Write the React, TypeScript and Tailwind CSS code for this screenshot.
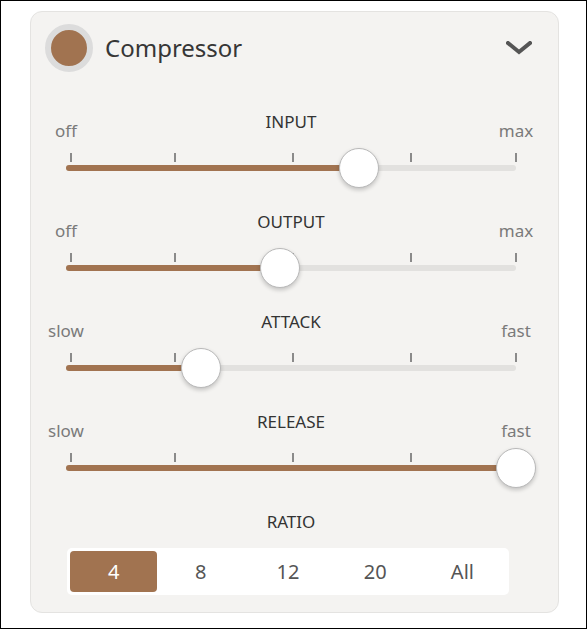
const BROWN = 'bg-[#a17350]';

type SliderDef = { name: string; left: string; right: string; value: number };

const sliders: SliderDef[] = [
  { name: 'INPUT', left: 'off', right: 'max', value: 0.651 },
  { name: 'OUTPUT', left: 'off', right: 'max', value: 0.476 },
  { name: 'ATTACK', left: 'slow', right: 'fast', value: 0.3 },
  { name: 'RELEASE', left: 'slow', right: 'fast', value: 1 },
];

// tick offsets in px from track start (track is 450px wide)
const ticks = [4, 108, 226, 344, 449];

function Slider({ s }: { s: SliderDef }) {
  return (
    <div className="h-[100px] px-5">
      <div className="flex h-[33px]">
        <div className="flex w-0 justify-center pt-[9px]">
          <span className="whitespace-nowrap text-[17px] leading-[24px] text-[#7a7a7a]">{s.left}</span>
        </div>
        <div className="flex-1 text-center text-[17px] leading-[24px] text-[#333]">{s.name}</div>
        <div className="flex w-0 justify-center pt-[9px]">
          <span className="whitespace-nowrap text-[17px] leading-[24px] text-[#7a7a7a]">{s.right}</span>
        </div>
      </div>
      <div className="relative mt-[10px] h-[9px]">
        {ticks.map((t) => (
          <div key={t} className="absolute top-0 h-[9px] w-[1.5px] bg-[#8a8a8a]" style={{ left: t }} />
        ))}
      </div>
      <div className="relative mt-[3px] h-[6px] rounded-full bg-[#e2e1df]">
        <div className={`absolute inset-y-0 left-0 rounded-full ${BROWN}`} style={{ width: `${s.value * 100}%` }} />
        <div
          className="absolute top-1/2 h-[40px] w-[40px] -translate-x-1/2 -translate-y-1/2 rounded-full border border-[#b9b9b9] bg-white shadow-[0_2px_4px_rgba(0,0,0,0.2)]"
          style={{ left: `${s.value * 100}%` }}
        />
      </div>
    </div>
  );
}

export default function App() {
  const ratios = ['4', '8', '12', '20', 'All'];
  return (
    <div
      className="box-border h-[629px] w-[587px] border border-black bg-white pl-[29px] pt-[10px]"
      style={{ fontFamily: '"Noto Sans", "Open Sans", sans-serif' }}
    >
      <div className="box-border h-[602px] w-[529px] rounded-[12px] border border-[#e4e3e1] bg-[#f4f3f1]">
        <div className="flex items-center pl-[14px] pr-[26px] pt-[12px]">
          <div className={`box-border h-[48px] w-[48px] rounded-full border-[6px] border-[#dcdcdc] ${BROWN}`} />
          <span className="ml-[12px] flex-1 text-[24px] leading-[32px] text-[#363636]">Compressor</span>
          <svg width="26" height="14" viewBox="0 0 26 14" fill="none">
            <polyline points="2,2 13,11 24,2" stroke="#555" strokeWidth="4" strokeLinecap="square" strokeLinejoin="miter" />
          </svg>
        </div>
        <div className="ml-[15px] mt-[38px] w-[490px]">
          {sliders.map((s) => (
            <Slider key={s.name} s={s} />
          ))}
        </div>
        <div className="ml-[15px] w-[490px] text-center text-[17px] leading-[24px] text-[#333]">RATIO</div>
        <div className="ml-[36px] mt-[14px] flex w-[442px] rounded-[5px] bg-white p-[3px]">
          {ratios.map((r, i) => (
            <div
              key={r}
              className={`flex h-[41px] flex-1 items-center justify-center rounded-[4px] text-[20px] ${
                i === 0 ? `${BROWN} text-white` : 'text-[#555]'
              }`}
            >
              {r}
            </div>
          ))}
        </div>
      </div>
    </div>
  );
}
